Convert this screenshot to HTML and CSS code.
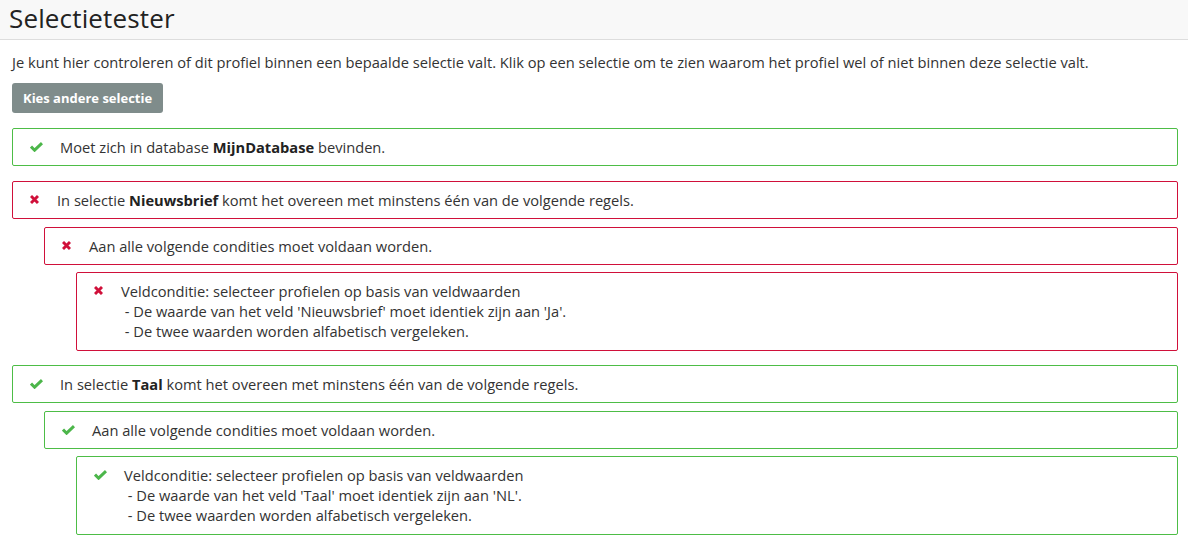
FILE: index.html
```html
<!DOCTYPE html>
<html lang="nl">
<head>
<meta charset="utf-8">
<title>Selectietester</title>
<link rel="stylesheet" href="styles.css">
</head>
<body>
<header class="topbar">
  <h1 class="title">Selectietester</h1>
</header>
<main class="content">
  <p class="intro">Je kunt hier controleren of dit profiel binnen een bepaalde selectie valt. Klik op een selectie om te zien waarom het profiel wel of niet binnen deze selectie valt.</p>
  <button class="btn" type="button">Kies andere selectie</button>

  <div class="tree">
    <div class="group">
      <div class="box ok">
        <span class="icon icon-ok"><svg width="13" height="10" viewBox="0 0 13 10"><polyline points="1,4.6 4.6,8.2 12,1.2" fill="none" stroke="currentColor" stroke-width="3"/></svg></span>
        <div class="text">Moet zich in database <b>MijnDatabase</b> bevinden.</div>
      </div>
    </div>

    <div class="group">
      <div class="box fail">
        <span class="icon icon-fail"><svg width="9" height="9" viewBox="0 0 9 9"><path d="M1,1 L8,8 M8,1 L1,8" fill="none" stroke="currentColor" stroke-width="2.9"/></svg></span>
        <div class="text">In selectie <b>Nieuwsbrief</b> komt het overeen met minstens één van de volgende regels.</div>
      </div>
      <div class="children lvl1">
        <div class="group">
          <div class="box fail">
            <span class="icon icon-fail"><svg width="9" height="9" viewBox="0 0 9 9"><path d="M1,1 L8,8 M8,1 L1,8" fill="none" stroke="currentColor" stroke-width="2.9"/></svg></span>
            <div class="text">Aan alle volgende condities moet voldaan worden.</div>
          </div>
          <div class="children lvl2">
            <div class="box fail multi">
              <span class="icon icon-fail"><svg width="9" height="9" viewBox="0 0 9 9"><path d="M1,1 L8,8 M8,1 L1,8" fill="none" stroke="currentColor" stroke-width="2.9"/></svg></span>
              <div class="text">Veldconditie: selecteer profielen op basis van veldwaarden<br>&nbsp;- De waarde van het veld 'Nieuwsbrief' moet identiek zijn aan 'Ja'.<br>&nbsp;- De twee waarden worden alfabetisch vergeleken.</div>
            </div>
          </div>
        </div>
      </div>
    </div>

    <div class="group">
      <div class="box ok">
        <span class="icon icon-ok"><svg width="13" height="10" viewBox="0 0 13 10"><polyline points="1,4.6 4.6,8.2 12,1.2" fill="none" stroke="currentColor" stroke-width="3"/></svg></span>
        <div class="text">In selectie <b>Taal</b> komt het overeen met minstens één van de volgende regels.</div>
      </div>
      <div class="children lvl1">
        <div class="group">
          <div class="box ok">
            <span class="icon icon-ok"><svg width="13" height="10" viewBox="0 0 13 10"><polyline points="1,4.6 4.6,8.2 12,1.2" fill="none" stroke="currentColor" stroke-width="3"/></svg></span>
            <div class="text">Aan alle volgende condities moet voldaan worden.</div>
          </div>
          <div class="children lvl2">
            <div class="box ok multi">
              <span class="icon icon-ok"><svg width="13" height="10" viewBox="0 0 13 10"><polyline points="1,4.6 4.6,8.2 12,1.2" fill="none" stroke="currentColor" stroke-width="3"/></svg></span>
              <div class="text">Veldconditie: selecteer profielen op basis van veldwaarden<br>&nbsp;- De waarde van het veld 'Taal' moet identiek zijn aan 'NL'.<br>&nbsp;- De twee waarden worden alfabetisch vergeleken.</div>
            </div>
          </div>
        </div>
      </div>
    </div>
  </div>
</main>
</body>
</html>
```

FILE: styles.css
```css
html, body {
  margin: 0;
  padding: 0;
  background: #ffffff;
}
body {
  font-family: "Open Sans", "Liberation Sans", sans-serif;
  font-size: 14.667px;
  line-height: 20px;
  color: #333333;
}
.topbar {
  height: 39px;
  background: #f8f8f8;
  border-bottom: 1px solid #dddddd;
  box-sizing: content-box;
}
.title {
  margin: 0;
  padding: 0 0 0 9px;
  font-size: 26px;
  font-weight: 400;
  line-height: 37px;
  color: #222222;
  letter-spacing: 0.15px;
}
.content {
  padding: 0 10px 0 12px;
}
.intro {
  margin: 12px 0 0 0;
}
.btn {
  display: block;
  margin-top: 11px;
  height: 30px;
  padding: 0 11px;
  border: none;
  border-radius: 3px;
  background: #7f8c8b;
  color: #ffffff;
  font-family: "Open Sans", "Liberation Sans", sans-serif;
  font-size: 13px;
  font-weight: 700;
  line-height: 30px;
}
.tree {
  margin-top: 15px;
  display: flex;
  flex-direction: column;
  gap: 14.5px;
}
.group {
  display: flex;
  flex-direction: column;
}
.children {
  padding-left: 32px;
  display: flex;
  flex-direction: column;
}
.lvl1 { margin-top: 8px; }
.lvl2 { margin-top: 7px; }
.box {
  display: flex;
  align-items: flex-start;
  padding: 8px 8px 8px 17px;
  border: 1px solid;
  border-radius: 2px;
}
.box.multi { padding-bottom: 9px; }
.box.ok { border-color: #4dbd46; }
.box.fail { border-color: #d0103a; }
.icon {
  display: flex;
  align-items: center;
  height: 20px;
  flex: none;
}
.icon svg { display: block; }
.icon-ok {
  width: 30px;
  color: #4cb64a;
}
.icon-fail {
  width: 27px;
  color: #d0103a;
}
.text b { font-weight: 700; color: #222222; }
```
